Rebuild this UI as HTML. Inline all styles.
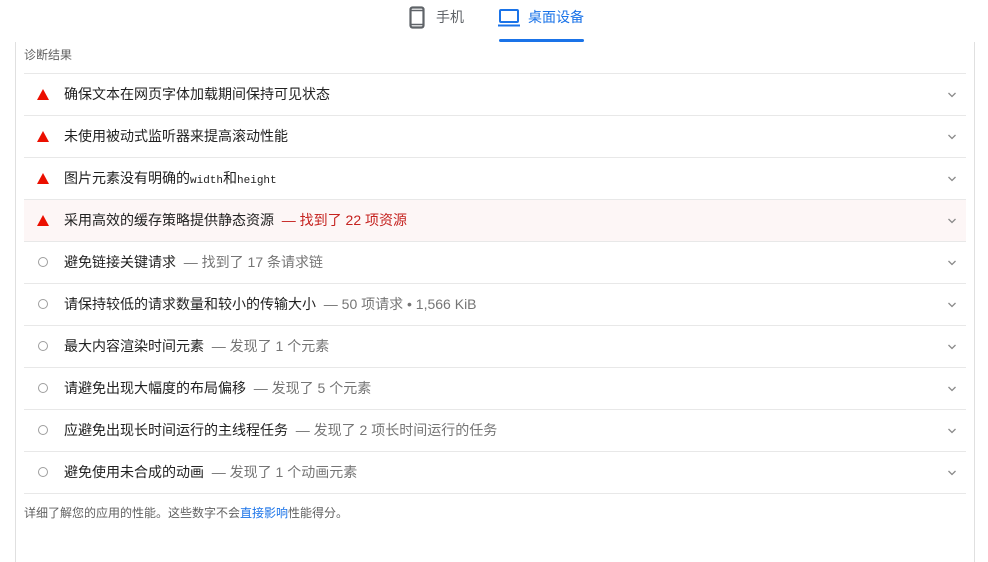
<!DOCTYPE html>
<html><head><meta charset="utf-8"><style>
body{margin:0;width:988px;height:552px;background:#fff;font-family:"Liberation Sans","Noto Sans CJK SC",sans-serif;position:relative;overflow:hidden;color:#212121}
.box{position:absolute;left:15px;top:42px;width:958px;height:520px;border-left:1px solid #e0e0e0;border-right:1px solid #e0e0e0}
.tabs{position:absolute;top:0;left:0;width:988px;height:44px}
.tab{position:absolute;top:7px;font-size:14px}
.ul{position:absolute;left:499px;top:39px;width:85px;height:3px;background:#1a73e8;border-radius:2px}
.title{position:absolute;left:24px;top:46px;font-size:12px;color:#616161}
.row{position:absolute;left:24px;width:942px;height:41px;border-top:1px solid #e8e8e8;font-size:14px;line-height:41px}
.row .t{position:absolute;left:40px}
.row .s{color:#757575}
.row .r{color:#c5221f}
.tri{position:absolute;left:13px;top:15px;width:0;height:0;border-left:6px solid transparent;border-right:6px solid transparent;border-bottom:11px solid #eb0f00}
.circ{position:absolute;left:14px;top:15px;width:8px;height:8px;border:1.5px solid #9e9e9e;border-radius:50%}
.chev{position:absolute;left:923px;top:16px}
.foot{position:absolute;left:24px;top:504px;font-size:12px;color:#616161}
.foot a{color:#1a73e8;text-decoration:none}
</style></head><body>
<div class="box"></div>
<div class="tabs">
<svg style="position:absolute;left:409px;top:6px" width="16" height="23" viewBox="0 0 16 23"><rect x="1.5" y="1.5" width="13" height="20" rx="2" fill="none" stroke="#5f6368" stroke-width="2.2"/><line x1="2" y1="4.5" x2="14" y2="4.5" stroke="#5f6368" stroke-width="1.5"/><line x1="2" y1="18.5" x2="14" y2="18.5" stroke="#5f6368" stroke-width="1.5"/></svg>
<div class="tab" style="left:436px;color:#5f6368">手机</div>
<svg style="position:absolute;left:498px;top:9px" width="22" height="18" viewBox="0 0 22 18"><rect x="2" y="1" width="18" height="12" rx="1" fill="none" stroke="#1a73e8" stroke-width="2"/><line x1="0" y1="16.5" x2="22" y2="16.5" stroke="#1a73e8" stroke-width="2"/></svg>
<div class="tab" style="left:528px;color:#1a73e8">桌面设备</div>
<div class="ul"></div>
</div>
<div class="title">诊断结果</div>

<div class="row" style="top:73px"><div class="tri"></div><span class="t">确保文本在网页字体加载期间保持可见状态</span><svg class="chev" width="10" height="10" viewBox="0 0 10 10"><path d="M1.5 3l3.5 3.5 3.5-3.5" fill="none" stroke="#8a8a8a" stroke-width="1.3"/></svg></div>
<div class="row" style="top:115px"><div class="tri"></div><span class="t">未使用被动式监听器来提高滚动性能</span><svg class="chev" width="10" height="10" viewBox="0 0 10 10"><path d="M1.5 3l3.5 3.5 3.5-3.5" fill="none" stroke="#8a8a8a" stroke-width="1.3"/></svg></div>
<div class="row" style="top:157px"><div class="tri"></div><span class="t">图片元素没有明确的<span style="font-family:'Liberation Mono',monospace;font-size:11px">width</span>和<span style="font-family:'Liberation Mono',monospace;font-size:11px">height</span></span><svg class="chev" width="10" height="10" viewBox="0 0 10 10"><path d="M1.5 3l3.5 3.5 3.5-3.5" fill="none" stroke="#8a8a8a" stroke-width="1.3"/></svg></div>
<div class="row" style="top:199px;background:#fdf6f6"><div class="tri"></div><span class="t">采用高效的缓存策略提供静态资源 <span class="r">&nbsp;— 找到了 22 项资源</span></span><svg class="chev" width="10" height="10" viewBox="0 0 10 10"><path d="M1.5 3l3.5 3.5 3.5-3.5" fill="none" stroke="#8a8a8a" stroke-width="1.3"/></svg></div>
<div class="row" style="top:241px"><div class="circ"></div><span class="t">避免链接关键请求 <span class="s">&nbsp;— 找到了 17 条请求链</span></span><svg class="chev" width="10" height="10" viewBox="0 0 10 10"><path d="M1.5 3l3.5 3.5 3.5-3.5" fill="none" stroke="#8a8a8a" stroke-width="1.3"/></svg></div>
<div class="row" style="top:283px"><div class="circ"></div><span class="t">请保持较低的请求数量和较小的传输大小 <span class="s">&nbsp;— 50 项请求 • 1,566 KiB</span></span><svg class="chev" width="10" height="10" viewBox="0 0 10 10"><path d="M1.5 3l3.5 3.5 3.5-3.5" fill="none" stroke="#8a8a8a" stroke-width="1.3"/></svg></div>
<div class="row" style="top:325px"><div class="circ"></div><span class="t">最大内容渲染时间元素 <span class="s">&nbsp;— 发现了 1 个元素</span></span><svg class="chev" width="10" height="10" viewBox="0 0 10 10"><path d="M1.5 3l3.5 3.5 3.5-3.5" fill="none" stroke="#8a8a8a" stroke-width="1.3"/></svg></div>
<div class="row" style="top:367px"><div class="circ"></div><span class="t">请避免出现大幅度的布局偏移 <span class="s">&nbsp;— 发现了 5 个元素</span></span><svg class="chev" width="10" height="10" viewBox="0 0 10 10"><path d="M1.5 3l3.5 3.5 3.5-3.5" fill="none" stroke="#8a8a8a" stroke-width="1.3"/></svg></div>
<div class="row" style="top:409px"><div class="circ"></div><span class="t">应避免出现长时间运行的主线程任务 <span class="s">&nbsp;— 发现了 2 项长时间运行的任务</span></span><svg class="chev" width="10" height="10" viewBox="0 0 10 10"><path d="M1.5 3l3.5 3.5 3.5-3.5" fill="none" stroke="#8a8a8a" stroke-width="1.3"/></svg></div>
<div class="row" style="top:451px;border-bottom:1px solid #e8e8e8"><div class="circ"></div><span class="t">避免使用未合成的动画 <span class="s">&nbsp;— 发现了 1 个动画元素</span></span><svg class="chev" width="10" height="10" viewBox="0 0 10 10"><path d="M1.5 3l3.5 3.5 3.5-3.5" fill="none" stroke="#8a8a8a" stroke-width="1.3"/></svg></div>
<div class="foot">详细了解您的应用的性能。这些数字不会<a>直接影响</a>性能得分。</div>
</body></html>
